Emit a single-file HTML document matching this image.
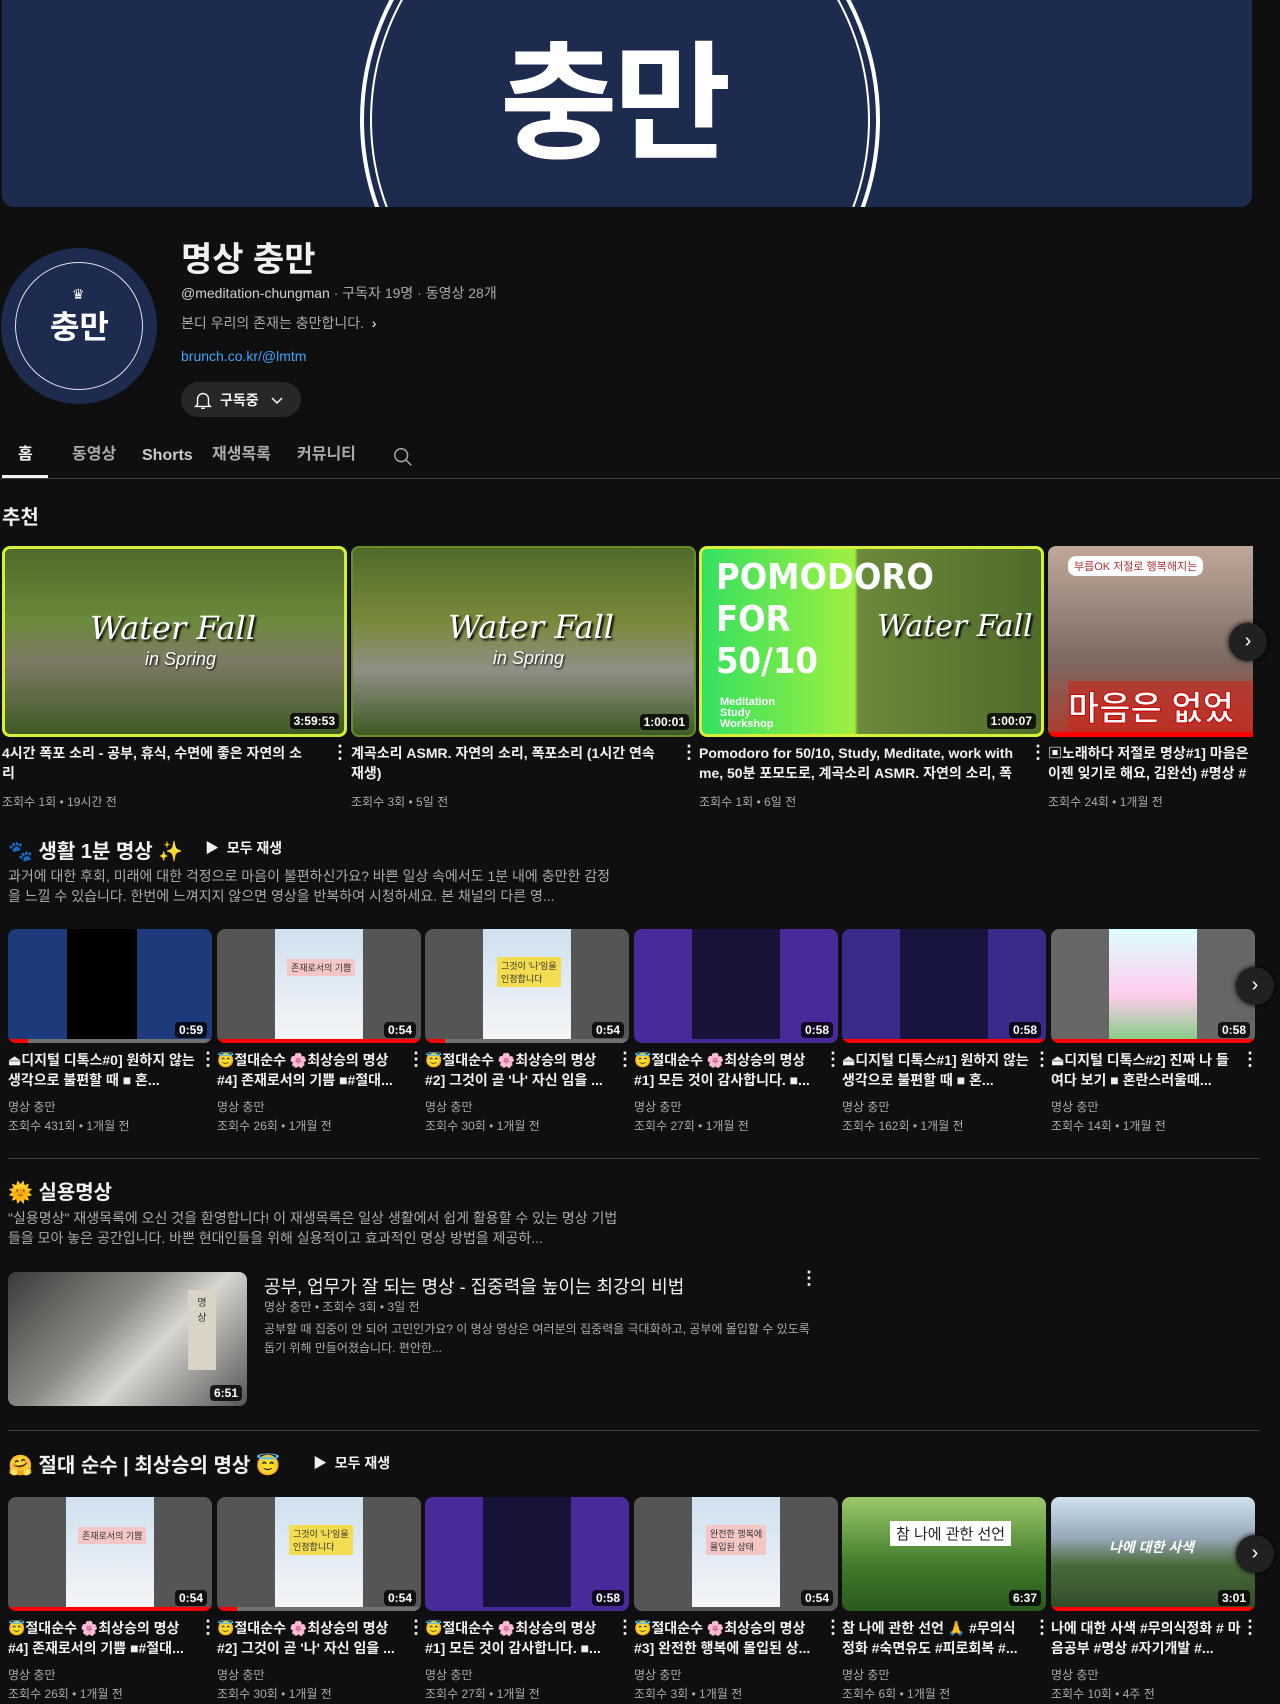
<!DOCTYPE html>
<html><head><meta charset="utf-8"><style>
*{margin:0;padding:0;box-sizing:border-box}
body{width:1280px;height:1702px;background:#0f0f0f;color:#f1f1f1;font-family:"Liberation Sans","Noto Sans CJK KR",sans-serif;position:relative;overflow:hidden}
.a{position:absolute}
.banner{left:2px;top:0;width:1250px;height:207px;background:#1d2b4e;border-radius:0 0 12px 12px;overflow:hidden}
.t{white-space:nowrap;overflow:hidden}
.g{color:#aaa}
.tab{position:absolute;top:444px;height:22px;line-height:22px;font-size:16px;font-weight:bold;white-space:nowrap}
.thumb{position:absolute;border-radius:8px;overflow:hidden}
.dur{position:absolute;right:5px;bottom:5px;background:rgba(0,0,0,.8);color:#fff;font-size:12px;font-weight:bold;padding:1px 4px;border-radius:4px}
.bar{position:absolute;left:0;bottom:0;height:4px;width:100%;background:#717171}
.bar i{display:block;height:4px;background:#f00}
.vt{font-size:14px;font-weight:bold;line-height:20px;color:#f1f1f1}
.m{font-size:12px;color:#aaa}
.dots{position:absolute;font-size:18px;font-weight:bold;color:#f1f1f1}
.nx{position:absolute;width:38px;height:38px;border-radius:50%;background:#212121;color:#fff;text-align:center;line-height:36px;font-size:20px;box-shadow:0 0 6px #000}
.hr{position:absolute;left:0;height:1px;background:#3f3f3f}
</style></head><body>
<div class="a banner">
  <div class="a" style="left:358px;top:-140px;width:520px;height:520px;border:4px solid #fff;border-radius:50%"></div>
  <div class="a" style="left:368px;top:-130px;width:500px;height:500px;border:2px solid #fff;border-radius:50%"></div>
  <div class="a" style="left:498px;top:0px;font-size:128px;font-weight:bold;color:#fff;font-family:'Noto Sans CJK KR',sans-serif;letter-spacing:-4px">충만</div>
</div>
<div class="a" style="left:1px;top:248px;width:156px;height:156px;border-radius:50%;background:#1d2b4e"></div>
<div class="a" style="left:15px;top:262px;width:128px;height:128px;border-radius:50%;border:1px solid #dfe3ea"></div>
<div class="a" style="left:72px;top:286px;color:#fff;font-size:14px">♛</div>
<div class="a" style="left:50px;top:302px;color:#fff;font-size:32px;font-weight:bold;font-family:'Noto Sans CJK KR',sans-serif">충만</div>
<div class="a t" style="left:181px;top:232px;font-size:34px;font-weight:bold">명상 충만</div>
<div class="a t g" style="left:181px;top:283px;font-size:14px"><span style="color:#f1f1f1;opacity:.85">@meditation-chungman</span> · 구독자 19명 · 동영상 28개</div>
<div class="a t g" style="left:181px;top:313px;font-size:14px">본디 우리의 존재는 충만합니다. &nbsp;<span style="color:#fff">›</span></div>
<div class="a t" style="left:181px;top:348px;font-size:14px;color:#3ea6ff">brunch.co.kr/@lmtm</div>
<div class="a" style="left:181px;top:382px;width:120px;height:35px;border-radius:18px;background:#272727"></div>
<svg class="a" style="left:192px;top:389px" width="22" height="22" viewBox="0 0 24 24" fill="none" stroke="#fff" stroke-width="1.5"><path d="M6 17V11a6 6 0 0 1 12 0v6l2 2H4z M10 21h4"/></svg>
<div class="a t" style="left:220px;top:390px;font-size:14px;font-weight:bold">구독중</div>
<svg class="a" style="left:270px;top:393px" width="14" height="14" viewBox="0 0 14 14" fill="none" stroke="#fff" stroke-width="1.5"><path d="M2 5l5 5 5-5"/></svg>
<div class="tab" style="left:18px">홈</div>
<div class="tab g" style="left:72px">동영상</div>
<div class="tab" style="left:142px;color:#ccc"><span style="display:inline-block;line-height:22px;vertical-align:top;padding-top:1px">Shorts</span></div>
<div class="tab g" style="left:212px">재생목록</div>
<div class="tab g" style="left:297px">커뮤니티</div>
<svg class="a" style="left:392px;top:446px" width="22" height="22" viewBox="0 0 24 24" fill="none" stroke="#aaa" stroke-width="1.6"><circle cx="10" cy="10" r="7"/><path d="M15 15l6 6"/></svg>
<div class="a" style="left:2px;top:475px;width:46px;height:3px;background:#f1f1f1"></div>
<div class="hr" style="top:478px;width:1280px"></div>

<div class="a t" style="left:2px;top:501px;font-size:20px;font-weight:bold">추천</div>
<div class="thumb" style="left:2px;top:546px;width:345px;height:191px;border:3px solid #d6f03a;background:linear-gradient(#4f6b2a,#6b8a3c 40%,#7f7a66 60%,#3e5b24)"><div class="a" style="left:85px;top:60px;font-size:32px;color:#fff;font-family:'DejaVu Serif',serif;font-style:italic;text-shadow:2px 2px 2px #000">Water Fall</div><div class="a" style="left:140px;top:100px;font-size:18px;color:#fff;font-style:italic;text-shadow:1px 1px 2px #000">in Spring</div><div class="dur">3:59:53</div></div>
<div class="thumb" style="left:351px;top:546px;width:345px;height:191px;border:2px solid #6c8c2a;background:linear-gradient(#4f6b2a,#7a8a3c 40%,#8f8f86 65%,#3e5b24)"><div class="a" style="left:95px;top:60px;font-size:32px;color:#fff;font-family:'DejaVu Serif',serif;font-style:italic;text-shadow:2px 2px 2px #000">Water Fall</div><div class="a" style="left:140px;top:100px;font-size:18px;color:#fff;font-style:italic;text-shadow:1px 1px 2px #000">in Spring</div><div class="dur">1:00:01</div></div>
<div class="thumb" style="left:699px;top:546px;width:345px;height:191px;border:3px solid #d6f03a;background:linear-gradient(90deg,#35e060 0,#9ff040 45%,#6b8a3c 46%,#4f6b2a)"><div class="a" style="left:14px;top:8px;font-size:36px;line-height:42px;color:#fff;font-weight:bold;font-family:'DejaVu Sans Condensed',sans-serif">POMODORO<br>FOR<br>50/10</div><div class="a" style="left:18px;top:148px;font-size:11px;line-height:11px;color:#fff;font-weight:bold">Meditation<br>Study<br>Workshop</div><div class="a" style="left:175px;top:60px;font-size:30px;color:#fff;font-style:italic;font-family:'DejaVu Serif',serif;text-shadow:2px 2px 2px #000">Water Fall</div><div class="dur">1:00:07</div></div>
<div class="thumb" style="left:1048px;top:546px;width:205px;height:191px;border-radius:8px 0 0 8px;background:linear-gradient(#bfa89a,#7d6a62 60%,#b03a2e)"><div class="a" style="left:20px;top:10px;background:#fff;color:#a33;font-size:11px;padding:2px 6px;border-radius:8px">부릅OK 저절로 행복해지는</div><div class="a" style="left:20px;top:135px;font-size:34px;font-weight:bold;color:#fff;-webkit-text-stroke:1px #c00;background:rgba(200,40,30,.6)">마음은 없었어</div><div class="bar" style="height:5px"><i style="width:100%;height:5px"></i></div></div>
<div class="nx" style="left:1229px;top:623px">›</div>
<div class="a vt" style="left:2px;top:743px;width:310px">4시간 폭포 소리 - 공부, 휴식, 수면에 좋은 자연의 소리</div>
<div class="a vt" style="left:351px;top:743px;width:310px">계곡소리 ASMR. 자연의 소리, 폭포소리 (1시간 연속 재생)</div>
<div class="a vt" style="left:699px;top:743px;width:320px;height:40px;overflow:hidden">Pomodoro for 50/10, Study, Meditate, work with me, 50분 포모도로, 계곡소리 ASMR. 자연의 소리, 폭포...</div>
<div class="a vt" style="left:1048px;top:743px;width:232px;height:40px;overflow:hidden;white-space:nowrap">▣노래하다 저절로 명상#1] 마음은<br>이젠 잊기로 해요, 김완선) #명상 #</div>
<div class="dots" style="left:331px;top:742px">⋮</div><div class="dots" style="left:680px;top:742px">⋮</div><div class="dots" style="left:1029px;top:742px">⋮</div>
<div class="a m" style="left:2px;top:793px">조회수 1회 • 19시간 전</div>
<div class="a m" style="left:351px;top:793px">조회수 3회 • 5일 전</div>
<div class="a m" style="left:699px;top:793px">조회수 1회 • 6일 전</div>
<div class="a m" style="left:1048px;top:793px">조회수 24회 • 1개월 전</div>

<div class="a t" style="left:8px;top:835px;font-size:20px;font-weight:bold">🐾 생활 1분 명상 ✨</div>
<div class="a t" style="left:205px;top:838px;font-size:14px;font-weight:bold">▶ &nbsp;모두 재생</div>
<div class="a g" style="left:8px;top:866px;font-size:14px;line-height:20px;width:610px">과거에 대한 후회, 미래에 대한 걱정으로 마음이 불편하신가요? 바쁜 일상 속에서도 1분 내에 충만한 감정을 느낄 수 있습니다. 한번에 느껴지지 않으면 영상을 반복하여 시청하세요. 본 채널의 다른 영...</div>

<div class="thumb" style="left:8px;top:929px;width:204px;height:114px;background:#1d3a7a"><div class="a" style="left:59px;top:0;width:70px;height:110px;background:#000"></div><div class="dur">0:59</div><div class="bar"><i style="width:10%"></i></div></div>
<div class="thumb" style="left:217px;top:929px;width:204px;height:114px;background:#555"><div class="a" style="left:58px;top:0;width:88px;height:110px;background:linear-gradient(#cfe0f0,#f4f6f8)"></div><div class="a" style="left:70px;top:30px;background:#f4c6c6;color:#333;font-size:9px;padding:2px 4px">존재로서의 기쁨</div><div class="dur">0:54</div><div class="bar"><i style="width:100%"></i></div></div>
<div class="thumb" style="left:425px;top:929px;width:204px;height:114px;background:#555"><div class="a" style="left:58px;top:0;width:88px;height:110px;background:linear-gradient(#cfe0f0,#f4f6f8)"></div><div class="a" style="left:72px;top:28px;background:#f4dc50;color:#333;font-size:9px;padding:2px 4px">그것이 '나'임을<br>인정합니다</div><div class="dur">0:54</div><div class="bar"><i style="width:10%"></i></div></div>
<div class="thumb" style="left:634px;top:929px;width:204px;height:114px;background:#4a2a9a"><div class="a" style="left:58px;top:0;width:88px;height:110px;background:#161238"></div><div class="dur">0:58</div></div>
<div class="thumb" style="left:842px;top:929px;width:204px;height:114px;background:#3a2a8a"><div class="a" style="left:58px;top:0;width:88px;height:110px;background:#181440"></div><div class="dur">0:58</div><div class="bar"><i style="width:100%"></i></div></div>
<div class="thumb" style="left:1051px;top:929px;width:204px;height:114px;background:#666"><div class="a" style="left:58px;top:0;width:88px;height:110px;background:linear-gradient(#dff,#fce 60%,#8c8)"></div><div class="dur">0:58</div><div class="bar"><i style="width:100%"></i></div></div>
<div class="nx" style="left:1236px;top:967px">›</div>

<div class="a vt" style="left:8px;top:1050px;width:190px;height:40px;overflow:hidden">⏏디지털 디톡스#0] 원하지 않는 생각으로 불편할 때 ■ 혼...</div>
<div class="a vt" style="left:217px;top:1050px;width:190px;height:40px;overflow:hidden">😇절대순수 🌸최상승의 명상 #4] 존재로서의 기쁨 ■#절대...</div>
<div class="a vt" style="left:425px;top:1050px;width:190px;height:40px;overflow:hidden">😇절대순수 🌸최상승의 명상 #2] 그것이 곧 '나' 자신 임을 ...</div>
<div class="a vt" style="left:634px;top:1050px;width:190px;height:40px;overflow:hidden">😇절대순수 🌸최상승의 명상 #1] 모든 것이 감사합니다. ■...</div>
<div class="a vt" style="left:842px;top:1050px;width:190px;height:40px;overflow:hidden">⏏디지털 디톡스#1] 원하지 않는 생각으로 불편할 때 ■ 혼...</div>
<div class="a vt" style="left:1051px;top:1050px;width:190px;height:40px;overflow:hidden">⏏디지털 디톡스#2] 진짜 나 들여다 보기 ■ 혼란스러울때...</div>
<div class="dots" style="left:199px;top:1049px">⋮</div><div class="dots" style="left:407px;top:1049px">⋮</div><div class="dots" style="left:616px;top:1049px">⋮</div><div class="dots" style="left:824px;top:1049px">⋮</div><div class="dots" style="left:1033px;top:1049px">⋮</div><div class="dots" style="left:1241px;top:1049px">⋮</div>
<div class="a m" style="left:8px;top:1098px;line-height:19px">명상 충만<br>조회수 431회 • 1개월 전</div>
<div class="a m" style="left:217px;top:1098px;line-height:19px">명상 충만<br>조회수 26회 • 1개월 전</div>
<div class="a m" style="left:425px;top:1098px;line-height:19px">명상 충만<br>조회수 30회 • 1개월 전</div>
<div class="a m" style="left:634px;top:1098px;line-height:19px">명상 충만<br>조회수 27회 • 1개월 전</div>
<div class="a m" style="left:842px;top:1098px;line-height:19px">명상 충만<br>조회수 162회 • 1개월 전</div>
<div class="a m" style="left:1051px;top:1098px;line-height:19px">명상 충만<br>조회수 14회 • 1개월 전</div>

<div class="hr" style="top:1158px;left:8px;width:1252px"></div>
<div class="a t" style="left:8px;top:1176px;font-size:20px;font-weight:bold">🌞 실용명상</div>
<div class="a g" style="left:8px;top:1208px;font-size:14px;line-height:20px;width:610px">"실용명상" 재생목록에 오신 것을 환영합니다! 이 재생목록은 일상 생활에서 쉽게 활용할 수 있는 명상 기법들을 모아 놓은 공간입니다. 바쁜 현대인들을 위해 실용적이고 효과적인 명상 방법을 제공하...</div>
<div class="thumb" style="left:8px;top:1272px;width:239px;height:134px;background:linear-gradient(135deg,#3a3a3a,#8a8a84 40%,#d8d6d0 60%,#555)"><div class="a" style="left:180px;top:18px;width:28px;height:80px;background:#d9d4c6;color:#333;font-size:10px;text-align:center;padding-top:4px">명<br>상</div><div class="dur">6:51</div></div>
<div class="a t" style="left:264px;top:1273px;font-size:18px">공부, 업무가 잘 되는 명상 - 집중력을 높이는 최강의 비법</div>
<div class="dots" style="left:800px;top:1268px">⋮</div>
<div class="a m" style="left:264px;top:1298px">명상 충만 • 조회수 3회 • 3일 전</div>
<div class="a m" style="left:264px;top:1320px;line-height:19px;width:560px">공부할 때 집중이 안 되어 고민인가요? 이 명상 영상은 여러분의 집중력을 극대화하고, 공부에 몰입할 수 있도록 돕기 위해 만들어졌습니다. 편안한...</div>

<div class="hr" style="top:1430px;left:8px;width:1252px"></div>
<div class="a t" style="left:8px;top:1449px;font-size:20px;font-weight:bold">🤗 절대 순수 | 최상승의 명상 😇</div>
<div class="a t" style="left:313px;top:1453px;font-size:14px;font-weight:bold">▶ &nbsp;모두 재생</div>

<div class="thumb" style="left:8px;top:1497px;width:204px;height:114px;background:#555"><div class="a" style="left:58px;top:0;width:88px;height:110px;background:linear-gradient(#cfe0f0,#f4f6f8)"></div><div class="a" style="left:70px;top:30px;background:#f4c6c6;color:#333;font-size:9px;padding:2px 4px">존재로서의 기쁨</div><div class="dur">0:54</div><div class="bar"><i style="width:100%"></i></div></div>
<div class="thumb" style="left:217px;top:1497px;width:204px;height:114px;background:#555"><div class="a" style="left:58px;top:0;width:88px;height:110px;background:linear-gradient(#cfe0f0,#f4f6f8)"></div><div class="a" style="left:72px;top:28px;background:#f4dc50;color:#333;font-size:9px;padding:2px 4px">그것이 '나'임을<br>인정합니다</div><div class="dur">0:54</div><div class="bar"><i style="width:10%"></i></div></div>
<div class="thumb" style="left:425px;top:1497px;width:204px;height:114px;background:#4a2a9a"><div class="a" style="left:58px;top:0;width:88px;height:110px;background:#161238"></div><div class="dur">0:58</div></div>
<div class="thumb" style="left:634px;top:1497px;width:204px;height:114px;background:#555"><div class="a" style="left:58px;top:0;width:88px;height:110px;background:linear-gradient(#cfe0f0,#f4f6f8)"></div><div class="a" style="left:72px;top:28px;background:#f4c6c6;color:#333;font-size:9px;padding:2px 4px">완전한 행복에<br>몰입된 상태</div><div class="dur">0:54</div></div>
<div class="thumb" style="left:842px;top:1497px;width:204px;height:114px;background:linear-gradient(#9cc86a,#3f7a2a 60%,#2a5a1e)"><div class="a" style="left:48px;top:24px;background:#fff;color:#222;font-size:15px;padding:2px 6px">참 나에 관한 선언</div><div class="dur">6:37</div></div>
<div class="thumb" style="left:1051px;top:1497px;width:204px;height:114px;background:linear-gradient(#cfe0ee,#9ab 35%,#4a6a3a 60%,#2f4a2a)"><div class="a" style="left:58px;top:40px;color:#fff;font-size:14px;font-weight:bold;font-style:italic">나에 대한 사색</div><div class="dur">3:01</div><div class="bar"><i style="width:100%"></i></div></div>
<div class="nx" style="left:1236px;top:1535px">›</div>

<div class="a vt" style="left:8px;top:1618px;width:190px;height:40px;overflow:hidden">😇절대순수 🌸최상승의 명상 #4] 존재로서의 기쁨 ■#절대...</div>
<div class="a vt" style="left:217px;top:1618px;width:190px;height:40px;overflow:hidden">😇절대순수 🌸최상승의 명상 #2] 그것이 곧 '나' 자신 임을 ...</div>
<div class="a vt" style="left:425px;top:1618px;width:190px;height:40px;overflow:hidden">😇절대순수 🌸최상승의 명상 #1] 모든 것이 감사합니다. ■...</div>
<div class="a vt" style="left:634px;top:1618px;width:190px;height:40px;overflow:hidden">😇절대순수 🌸최상승의 명상 #3] 완전한 행복에 몰입된 상...</div>
<div class="a vt" style="left:842px;top:1618px;width:190px;height:40px;overflow:hidden">참 나에 관한 선언 🙏 #무의식 정화 #숙면유도 #피로회복 #...</div>
<div class="a vt" style="left:1051px;top:1618px;width:190px;height:40px;overflow:hidden">나에 대한 사색 #무의식정화 # 마음공부 #명상 #자기개발 #...</div>
<div class="dots" style="left:199px;top:1617px">⋮</div><div class="dots" style="left:407px;top:1617px">⋮</div><div class="dots" style="left:616px;top:1617px">⋮</div><div class="dots" style="left:824px;top:1617px">⋮</div><div class="dots" style="left:1033px;top:1617px">⋮</div><div class="dots" style="left:1241px;top:1617px">⋮</div>
<div class="a m" style="left:8px;top:1666px;line-height:19px">명상 충만<br>조회수 26회 • 1개월 전</div>
<div class="a m" style="left:217px;top:1666px;line-height:19px">명상 충만<br>조회수 30회 • 1개월 전</div>
<div class="a m" style="left:425px;top:1666px;line-height:19px">명상 충만<br>조회수 27회 • 1개월 전</div>
<div class="a m" style="left:634px;top:1666px;line-height:19px">명상 충만<br>조회수 3회 • 1개월 전</div>
<div class="a m" style="left:842px;top:1666px;line-height:19px">명상 충만<br>조회수 6회 • 1개월 전</div>
<div class="a m" style="left:1051px;top:1666px;line-height:19px">명상 충만<br>조회수 10회 • 4주 전</div>
</body></html>
